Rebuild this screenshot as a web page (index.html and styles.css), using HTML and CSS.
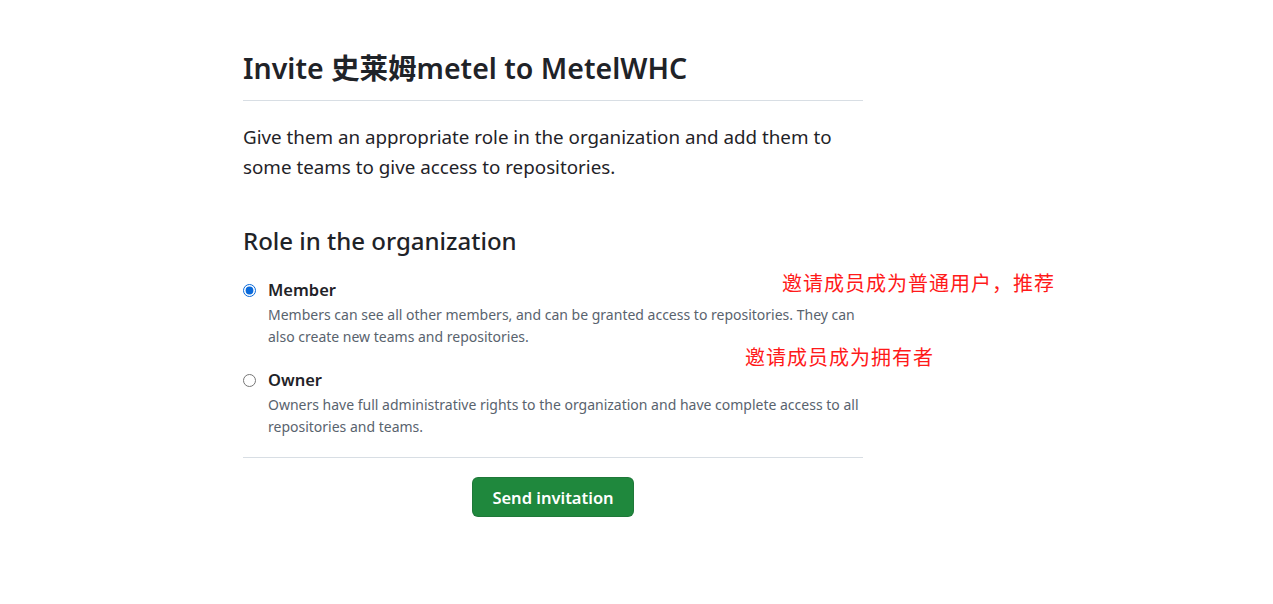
FILE: index.html
```html
<!DOCTYPE html>
<html lang="en">
<head>
<meta charset="utf-8">
<title>Invite member</title>
<link rel="stylesheet" href="styles.css">
</head>
<body>
<main class="page">
  <h1 class="title">Invite 史莱姆metel to MetelWHC</h1>
  <p class="lead">Give them an appropriate role in the organization and add them to some teams to give access to repositories.</p>
  <h2 class="subtitle">Role in the organization</h2>
  <div class="options">
    <label class="option">
      <input type="radio" name="role" class="radio" checked>
      <span class="option-body">
        <span class="option-title">Member</span>
        <span class="option-desc">Members can see all other members, and can be granted access to repositories. They can also create new teams and repositories.</span>
      </span>
    </label>
    <label class="option">
      <input type="radio" name="role" class="radio">
      <span class="option-body">
        <span class="option-title">Owner</span>
        <span class="option-desc">Owners have full administrative rights to the organization and have complete access to all repositories and teams.</span>
      </span>
    </label>
  </div>
  <div class="actions">
    <button class="btn-primary" type="button">Send invitation</button>
  </div>
</main>
<div class="note note-member">邀请成员成为普通用户，推荐</div>
<div class="note note-owner">邀请成员成为拥有者</div>
</body>
</html>
```
FILE: styles.css
```css
html, body {
  margin: 0;
  padding: 0;
  background: #ffffff;
}
body {
  font-family: "Noto Sans", "Noto Sans CJK SC", sans-serif;
  color: #1f2328;
  position: relative;
  min-height: 604px;
}
.page {
  width: 620px;
  margin-left: 243px;
  padding-top: 47px;
}
.title {
  margin: 0;
  font-size: 28.5px;
  font-weight: 600;
  line-height: 42px;
  padding-bottom: 11px;
  border-bottom: 1px solid #d8dee4;
}
.lead {
  margin: 21px 0 0;
  font-size: 18.8px;
  line-height: 30px;
}
.subtitle {
  margin: 41px 0 0;
  font-size: 24px;
  font-weight: 500;
  line-height: 36px;
}
.options {
  margin-top: 17px;
  padding-bottom: 19px;
  border-bottom: 1px solid #d8dee4;
  display: flex;
  flex-direction: column;
  gap: 18px;
}
.option {
  display: flex;
  align-items: flex-start;
  gap: 12px;
}
.radio {
  margin: 7px 0 0 0;
  width: 15px;
  height: 15px;
  accent-color: #0969da;
}
.option-body {
  display: flex;
  flex-direction: column;
}
.option-title {
  font-size: 16.5px;
  font-weight: 600;
  line-height: 28px;
}
.option-desc {
  font-size: 14px;
  line-height: 22px;
  color: #59636e;
}
.actions {
  display: flex;
  justify-content: center;
  padding-top: 19px;
}
.btn-primary {
  background: #1f883d;
  color: #ffffff;
  border: 1px solid rgba(31, 35, 40, 0.15);
  border-radius: 6px;
  width: 162px;
  height: 40px;
  font-family: "Noto Sans", sans-serif;
  font-size: 16.5px;
  font-weight: 600;
  cursor: pointer;
}
.note {
  position: absolute;
  color: #ff1a1a;
  font-family: "Noto Sans CJK SC", sans-serif;
  font-size: 20px;
  letter-spacing: 1px;
  line-height: 28px;
}
.note-member {
  left: 782px;
  top: 269px;
}
.note-owner {
  left: 745px;
  top: 343px;
}
```
